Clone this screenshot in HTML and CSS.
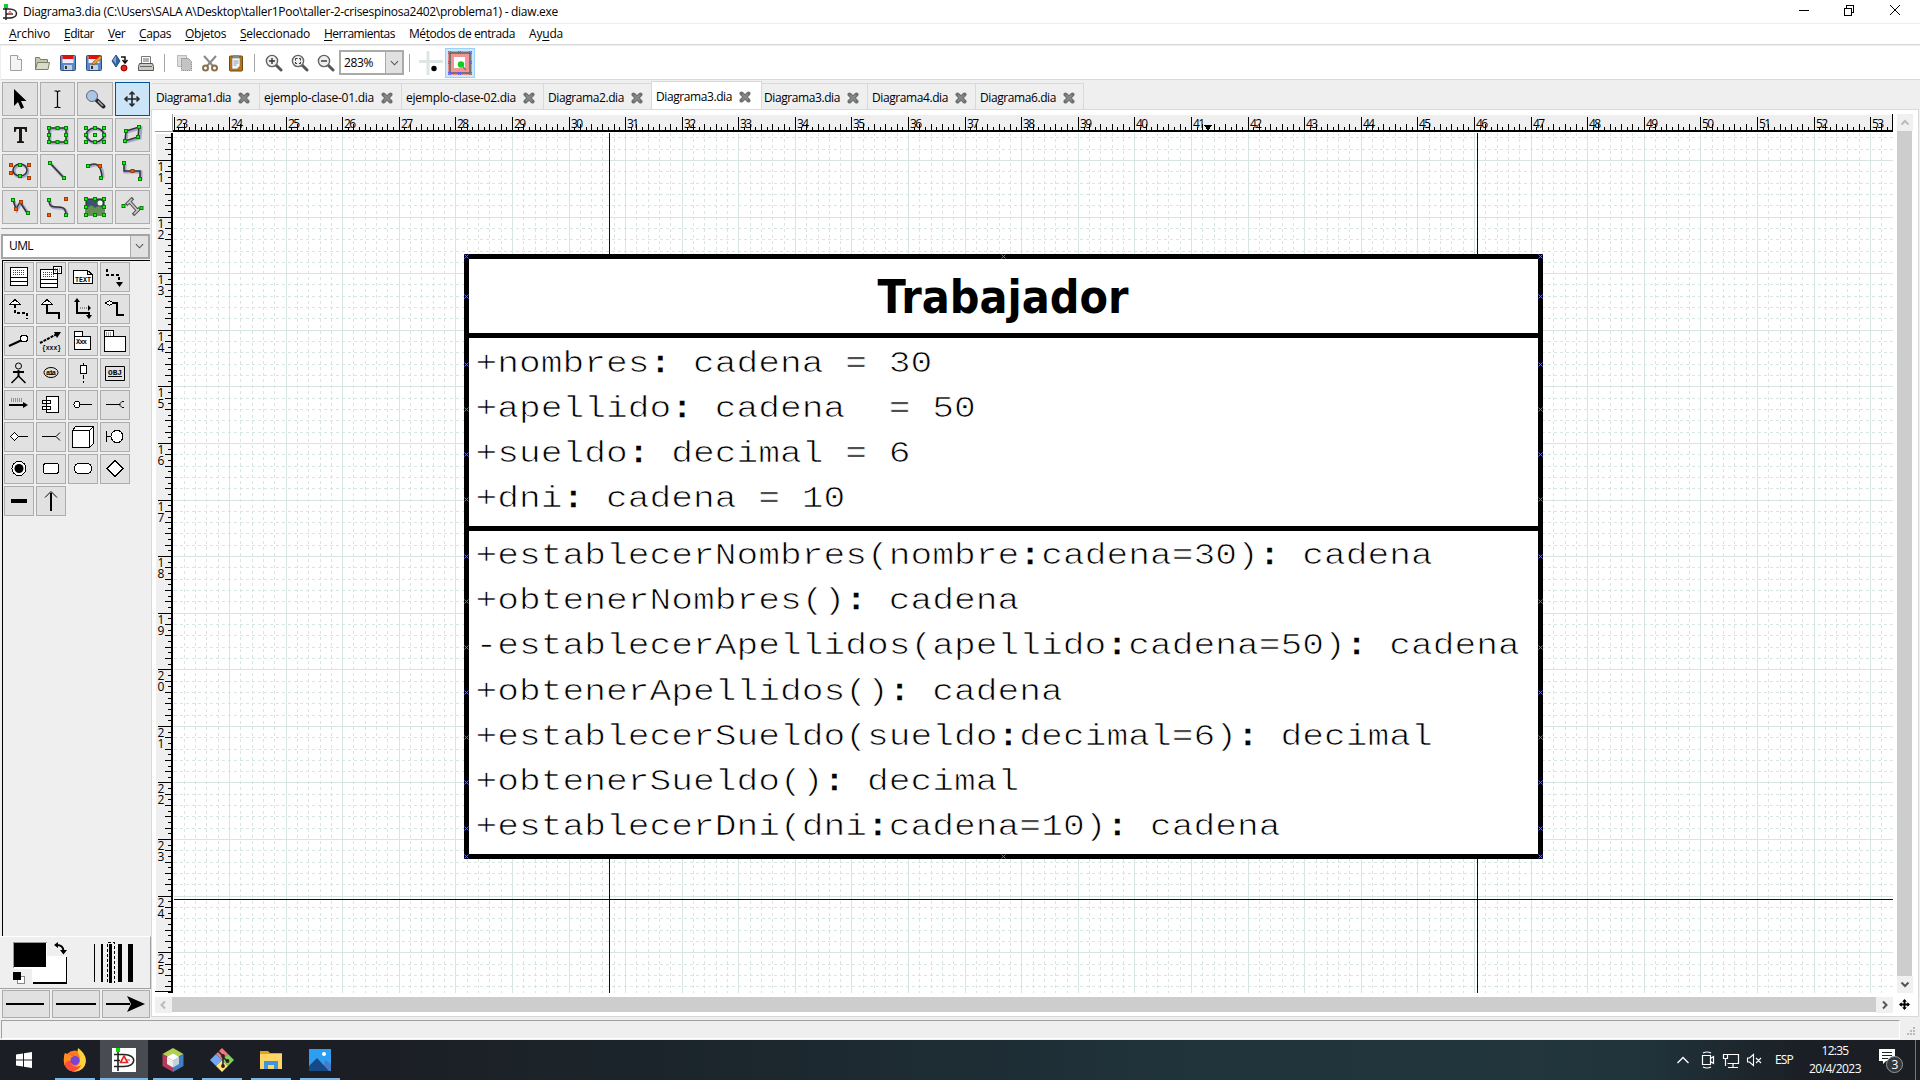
FILE: index.html
```html
<!DOCTYPE html>
<html lang="es">
<head>
<meta charset="utf-8">
<title>Diagrama3.dia</title>
<link rel="stylesheet" href="styles.css">
</head>
<body>
<svg class="defs" width="0" height="0">
  <defs>
    <symbol id="x" viewBox="0 0 12 12"><path d="M2.5 2.5l7 7M9.500 2.500l-7 7" stroke="#6c706c" stroke-width="4" stroke-linecap="round"/><path d="M3 3l6 6M9 3l-6 6" stroke="#868a86" stroke-width="1.800"/></symbol>
    <symbol id="lens" viewBox="0 0 18 18"><path d="M11 11l5 5" stroke="#555753" stroke-width="3" stroke-linecap="round"/><circle cx="7" cy="7" r="5.600" fill="#eeeeec" stroke="#61635f" stroke-width="1.400"/></symbol>
    <g id="g"><rect x="-1.500" y="-1.500" width="3" height="3" fill="#0f0" stroke="#0a7a0a"/></g>
    <g id="r"><rect x="-1.500" y="-1.500" width="3" height="3" fill="#ff5a00" stroke="#a33a00"/></g>
    <g id="cp"><path d="M-2 -2l4 4M2 -2l-4 4" stroke="#6464ff" stroke-width="1"/></g>
  </defs>
</svg>
<header class="titlebar">
  <svg class="appicon" viewBox="0 0 16 18"><path d="M1 6h6c10 0 10 9 0 9H1M4 3v14M4 11h7" fill="none" stroke="#222" stroke-width="1.500"/><path d="M8 8l2 3H6z" fill="none" stroke="#d55"/><rect x="2" y="1" width="4" height="4" fill="#1c3"/></svg>
  <span class="t" data-w="535">Diagrama3.dia (C:\Users\SALA A\Desktop\taller1Poo\taller-2-crisespinosa2402\problema1) - diaw.exe</span>
  <svg class="winbtns" viewBox="0 0 116 20" shape-rendering="crispEdges"><path d="M3 8.500h10M48.500 6.500h7v7h-7zM50.500 6v-2.500h7v7h-2" fill="none" stroke="#000"/><path d="M94 3l10 10M104 3L94 13" stroke="#000" shape-rendering="auto"/></svg>
</header>
<nav class="menubar">
  <span class="t" data-w="41"><u>A</u>rchivo</span><span class="t" data-w="30"><u>E</u>ditar</span><span class="t" data-w="17"><u>V</u>er</span><span class="t" data-w="32"><u>C</u>apas</span><span class="t" data-w="41"><u>O</u>bjetos</span><span class="t" data-w="70"><u>S</u>eleccionado</span><span class="t" data-w="71"><u>H</u>erramientas</span><span class="t" data-w="106">Mé<u>t</u>odos de entrada</span><span class="t" data-w="34">Ay<u>u</u>da</span>
</nav>
<div class="toolbar">
  <svg class="i26" viewBox="0 0 18 18"><path d="M3.500 1.500h7l4 4v11h-11z" fill="#f4f4f3" stroke="#a0a09c"/><path d="M10.500 1.500v4h4" fill="#fff" stroke="#a0a09c"/></svg>
  <svg class="i26" viewBox="0 0 18 18"><path d="M2.500 15.500v-12h4l1 2h7v3" fill="#c3c6b4" stroke="#7b8264"/><path d="M2.500 15.500l2-7h12l-1.500 7z" fill="#d8dcc8" stroke="#7b8264"/></svg>
  <svg class="i26" viewBox="0 0 18 18"><rect x="1.500" y="1.500" width="15" height="15" rx="1" fill="#5c8ac4" stroke="#2c4f86"/><path d="M3.500 2h11v7h-11z" fill="#eef"/><path d="M3.500 2h11v3h-11z" fill="#e01010"/><path d="M5 11h8v5H5z" fill="#ccd"/><path d="M6 12h2v3H6z" fill="#234"/></svg>
  <svg class="i26" viewBox="0 0 18 18"><rect x="1.500" y="1.500" width="15" height="15" rx="1" fill="#5c8ac4" stroke="#2c4f86"/><path d="M3.500 2h11v7h-11z" fill="#eef"/><path d="M3.500 2h11v3h-11z" fill="#e01010"/><path d="M5 11h8v5H5z" fill="#ccd"/><path d="M6 12h2v3H6z" fill="#234"/><path d="M7 11l1-3 7-6 2 2-7 6z" fill="#f0a030" stroke="#85520c" stroke-width=".700"/></svg>
  <svg class="i26" viewBox="0 0 18 18"><path d="M5 1l4 6-4 6-4-6z" fill="#3465a4" stroke="#204a87"/><path d="M2 6l3-4v8z" fill="#86aad6"/><path d="M10 3h4v5M11.500 6l2.500 3 2.500-3" fill="none" stroke="#111" stroke-width="1.500"/><circle cx="13" cy="14" r="3" fill="#d22" stroke="#900"/></svg>
  <svg class="i26" viewBox="0 0 18 18"><path d="M4.500 9V2.500h9V9" fill="#fff" stroke="#777"/><path d="M2.500 9.500h13l1 3v4h-15v-4z" fill="#c8ccc4" stroke="#555"/><path d="M3 12.500h12M6 5h6M6 7h6" stroke="#666"/></svg>
  <i class="sep"></i>
  <svg class="i26" viewBox="0 0 18 18"><path d="M2.500 1.500h9v11h-9z" fill="#ddd" stroke="#888" stroke-dasharray="1 1"/><path d="M6.500 4.500h7l3 3v9h-10z" fill="#c4c4c4" stroke="#777" stroke-dasharray="1 1"/></svg>
  <svg class="i26" viewBox="0 0 18 18"><path d="M3 2l9 10M15 2L6 12" stroke="#888" stroke-width="2"/><circle cx="4.500" cy="14" r="2.500" fill="none" stroke="#8a7048" stroke-width="2"/><circle cx="13.500" cy="14" r="2.500" fill="none" stroke="#8a7048" stroke-width="2"/></svg>
  <svg class="i26" viewBox="0 0 18 18"><rect x="2.500" y="2" width="13" height="15" rx="1" fill="#b6731c" stroke="#704808"/><path d="M5 4h8v8l-3 3H5z" fill="#f5f5f5" stroke="#777" stroke-width=".600"/><path d="M6 1h6v3H6z" fill="#888"/><path d="M6.500 7h5M6.500 9h5M6.500 11h3" stroke="#999"/></svg>
  <i class="sep s2"></i>
  <svg class="i26" viewBox="0 0 18 18"><use href="#lens"/><path d="M4 7h6M7 4v6" stroke="#333" stroke-width="1.400"/></svg>
  <svg class="i26" viewBox="0 0 18 18"><use href="#lens"/><path d="M4.500 6.500v-2h2M8 4.500h1.500v2M9.500 8v1.500H8M6 9.500H4.500V8" stroke="#333" fill="none"/></svg>
  <svg class="i26" viewBox="0 0 18 18"><use href="#lens"/><path d="M4 7h6" stroke="#333" stroke-width="1.400"/></svg>
  <div class="zoom"><span class="t" data-w="29">283%</span><i><svg viewBox="0 0 10 6"><path d="M1 1l4 4 4-4" fill="none" stroke="#555" stroke-width="1.200"/></svg></i></div>
  <i class="sep s3"></i>
  <svg class="gridbtn" viewBox="0 0 24 24"><path d="M0 10.500h24M9 0v24" stroke="#dde6e4" stroke-width="3"/><circle cx="15" cy="17.500" r="2.700"/></svg>
  <svg class="snapbtn" viewBox="0 0 30 30"><rect x=".500" y=".500" width="29" height="29" fill="#cce8ff" stroke="#99d1ff"/><rect x="3" y="3" width="24" height="24" fill="#ee8b8b"/><rect x="5" y="5" width="20" height="20" fill="#f09696" stroke="#757575" stroke-width="2"/><rect x="9" y="9" width="11" height="11" fill="#fff"/><path d="M3 3l3 3M6 3L3 6M13 3l3 3M16 3l-3 3M24 3l3 3M27 3l-3 3M3 13l3 3M6 13l-3 3M24 13l3 3M27 13l-3 3M3 24l3 3M6 24l-3 3M13 24l3 3M16 24l-3 3M24 24l3 3M27 24l-3 3" stroke="#5a5af0" stroke-width="1"/><circle cx="16" cy="16.500" r="3.200" fill="#1c2"/><path d="M18 19l3 3" stroke="#777" stroke-width="1.500"/></svg>
</div>
<main class="main">
  <aside class="side">
    <div class="tools" id="tools">
      <b><svg viewBox="0 0 24 24"><path d="M6 2v17l4-4 3 7 3-1.500-3-6.500h5.500z"/></svg></b>
      <b><svg viewBox="0 0 24 24"><path d="M9.500 4h2l1 1 1-1h2M12.500 5v14M9.500 20.500h2l1-1 1 1h2" fill="none" stroke="#000" stroke-width="1.200"/></svg></b>
      <b><svg viewBox="0 0 24 24"><path d="M13.500 13l7 6.500" stroke="#222" stroke-width="4" stroke-linecap="round"/><path d="M15 14l5 5" stroke="#aaa" stroke-width="1.500"/><circle cx="9" cy="9" r="5.500" fill="#a9c6e6" stroke="#667"/></svg></b>
      <b class="on"><svg viewBox="0 0 24 24"><path d="M12 5v14M5 12h14" stroke="#222" stroke-width="1.600"/><path d="M9.500 7.500L12 5l2.500 2.500M9.500 16.500L12 19l2.500-2.500M7.500 9.500L5 12l2.500 2.500M16.500 9.500L19 12l-2.500 2.500" fill="none" stroke="#222" stroke-width="1.500"/></svg></b>
      <b><svg viewBox="0 0 24 24"><path d="M6 4h13v5h-1.500l-1-3h-2.500v12l2 .5v1.500H9V18.500l2-.5V6H8.500l-1 3H6z" fill="#1a1712"/></svg></b>
      <b><svg viewBox="0 0 24 24"><path class="sh" d="M5 6h17v14H5z"/><path class="ln" d="M4 5h17v14H4z"/><use href="#g" x="4" y="5"/><use href="#g" x="12.500" y="5"/><use href="#g" x="21" y="5"/><use href="#g" x="4" y="12"/><use href="#g" x="21" y="12"/><use href="#g" x="4" y="19"/><use href="#g" x="12.500" y="19"/><use href="#g" x="21" y="19"/></svg></b>
      <b><svg viewBox="0 0 24 24"><ellipse class="sh" cx="13" cy="13" rx="9" ry="7"/><ellipse class="ln" cx="12" cy="12" rx="9" ry="7"/><use href="#g" x="3" y="5"/><use href="#g" x="12" y="5"/><use href="#g" x="21" y="5"/><use href="#g" x="3" y="12"/><use href="#g" x="12" y="12"/><use href="#g" x="21" y="12"/><use href="#g" x="3" y="19"/><use href="#g" x="12" y="19"/><use href="#g" x="21" y="19"/></svg></b>
      <b><svg viewBox="0 0 24 24"><path class="sh" d="M7 9l14-4-1 10-14 4z"/><path class="ln" d="M6 8l13-4-1 10-13 4z"/><use href="#g" x="6" y="8"/><use href="#g" x="19" y="4"/><use href="#g" x="18" y="14"/><use href="#g" x="5" y="18"/></svg></b>
      <b><svg viewBox="0 0 24 24"><ellipse class="sh" cx="13" cy="12" rx="7" ry="6"/><ellipse class="ln" cx="12" cy="11" rx="7" ry="6"/><use href="#g" x="12" y="6"/><use href="#g" x="12" y="17"/><use href="#r" x="3" y="6"/><use href="#r" x="21" y="6"/><use href="#r" x="3" y="14"/><use href="#r" x="21" y="19"/></svg></b>
      <b><svg viewBox="0 0 24 24"><path class="sh" d="M6 5l14 15"/><path class="ln" d="M5 4l14 15"/><use href="#g" x="5" y="4"/><use href="#g" x="19" y="19"/></svg></b>
      <b><svg viewBox="0 0 24 24"><path class="sh" d="M6 8q14-7 14 11"/><path class="ln" d="M5 7Q18 0 19 19"/><use href="#g" x="5" y="7"/><use href="#r" x="17" y="7"/><use href="#g" x="18" y="19"/></svg></b>
      <b><svg viewBox="0 0 24 24"><path class="sh" d="M5 5v8h16v8"/><path class="ln" d="M4 4v8h16v8"/><use href="#g" x="4" y="4"/><use href="#r" x="12.500" y="12"/><use href="#g" x="20" y="20"/></svg></b>
      <b><svg viewBox="0 0 24 24"><path class="sh" d="M6 6l3 9 4-7 7 10"/><path class="ln" d="M5 5l3 9 4-7 7 11"/><use href="#g" x="5" y="5"/><use href="#r" x="8" y="14"/><use href="#r" x="13" y="7"/><use href="#g" x="20" y="18"/></svg></b>
      <b><svg viewBox="0 0 24 24"><path class="sh" d="M5 6c0 14 16 0 17 14"/><path class="ln" d="M4 5c0 14 16 0 17 14"/><use href="#g" x="4" y="5"/><use href="#r" x="4" y="20"/><use href="#r" x="21" y="4"/><use href="#g" x="21" y="20"/></svg></b>
      <b><svg viewBox="0 0 24 24"><rect x="3" y="4" width="18" height="16" fill="#3c5270" stroke="#222"/><circle cx="17" cy="8" r="2.500" fill="#ffd"/><path d="M3 15q5-8 9-2 4-4 9 1v6H3z" fill="#668f56"/><use href="#g" x="3" y="4"/><use href="#g" x="12" y="4"/><use href="#g" x="21" y="4"/><use href="#g" x="3" y="12"/><use href="#g" x="21" y="12"/><use href="#g" x="3" y="20"/><use href="#g" x="12" y="20"/><use href="#g" x="21" y="20"/></svg></b>
      <b><svg viewBox="0 0 24 24"><path d="M6 10l7-7M13 20l7-7M9 6l8 9" stroke="#555" stroke-width="3.500"/><path d="M7 9l5-5M14 19l5-5M9 6l8 9" stroke="#ccc" stroke-width="1.500"/><use href="#g" x="3.500" y="11"/><use href="#g" x="21.500" y="13"/></svg></b>
    </div>
    <div class="sheet"><span class="t" data-w="24">UML</span><i><svg viewBox="0 0 10 6"><path d="M1 1l4 4 4-4" fill="none" stroke="#555" stroke-width="1.200"/></svg></i></div>
    <div class="shapes">
      <b><svg viewBox="0 0 30 30"><path d="M6.500 5.500h17v18h-17zM6 15.500h18M6 19.500h18" class="w"/><path d="M9 8.500h12M9 10.500h12M9 12.500h12" class="d"/></svg></b>
      <b><svg viewBox="0 0 30 30"><path d="M4.500 7.500h17v18h-17zM4 17.500h18M4 21.500h18M17.500 4.500h8v7h-8z" class="w"/><path d="M7 10.500h9M7 12.500h12M7 14.500h12M19 7h5M19 9h5" class="d"/></svg></b>
      <b><svg viewBox="0 0 30 30"><path d="M5.500 8.500h14l5 4v9h-19zM19.500 8.500v4h5" class="w"/><text x="7" y="20" textLength="16" lengthAdjust="spacingAndGlyphs">TEXT</text></svg></b>
      <b><svg viewBox="0 0 30 30"><path d="M7 7v6h12v8" class="k" stroke-dasharray="3 2"/><path d="M16 20h7l-3.500 5z"/></svg></b>
      <b><svg viewBox="0 0 30 30"><path d="M11 11v8h12v6" class="k" stroke-dasharray="3 2"/><path d="M5.500 10.500h11l-5.500-5z" class="w"/></svg></b>
      <b><svg viewBox="0 0 30 30"><path d="M11 11v8h12v6" class="k"/><path d="M5.500 10.500h11l-5.500-5z" class="w"/></svg></b>
      <b><svg viewBox="0 0 30 30"><path d="M9 6v13h12v5" class="k"/><path d="M6 8l3-4 3 4zM18 21h6l-3 4zM20 11l3 3-3 3z"/><path d="M12 14h8" class="d"/></svg></b>
      <b><svg viewBox="0 0 30 30"><path d="M12 9h5v12h7" class="k"/><path d="M5.500 9l4-2.500 4 2.500-4 2.500z" class="w"/></svg></b>
      <b><svg viewBox="0 0 30 30"><path d="M5 20l13-6" class="k"/><circle cx="20" cy="12.500" r="3.500" class="w"/></svg></b>
      <b><svg viewBox="0 0 30 30"><path d="M4 17l17-9" class="k" stroke-dasharray="3 1"/><path d="M18 6h7l-4 6z"/><text x="6" y="24" textLength="19" lengthAdjust="spacingAndGlyphs">{xxx}</text></svg></b>
      <b><svg viewBox="0 0 30 30"><path d="M6.500 5.500h8v5h-8zM6.500 10.500h16v13h-16z" class="w"/><text x="8" y="18" textLength="11">Xxx</text></svg></b>
      <b><svg viewBox="0 0 30 30"><path d="M4.500 4.500h9v6h-9zM4.500 10.500h21v15h-21z" class="w"/><path d="M6 7h6M6 9h6" class="d"/></svg></b>
      <b><svg viewBox="0 0 30 30"><circle cx="14.500" cy="8" r="3" class="w n"/><path d="M14.500 12v7M9 14h11" class="k"/><path d="M14.500 18l-7 7M14.500 18l7 7" fill="none" stroke="#000" stroke-width="1.500"/></svg></b>
      <b><svg viewBox="0 0 30 30"><ellipse cx="15" cy="14.500" rx="7" ry="5" class="w n"/><text x="10" y="17" textLength="10">aia</text></svg></b>
      <b><svg viewBox="0 0 30 30"><path d="M15.500 5v20" class="w" stroke-dasharray="4 2"/><path d="M12.500 7.500h6v8h-6z" class="w"/></svg></b>
      <b><svg viewBox="0 0 30 30"><path d="M5.500 8.500h19v14h-19z" class="w n"/><path d="M8 18.500h14" class="w"/><text x="8" y="17" textLength="14" lengthAdjust="spacingAndGlyphs">OBJ</text></svg></b>
      <b><svg viewBox="0 0 30 30"><path d="M5 15h15" class="k"/><path d="M19 12l5 3-5 3z"/><path d="M7 9h11M7 11h11" class="d"/></svg></b>
      <b><svg viewBox="0 0 30 30"><path d="M10.500 6.500h12v16h-12zM6.500 10.500h8v3h-8zM6.500 16.500h8v3h-8z" class="w"/></svg></b>
      <b><svg viewBox="0 0 30 30"><path d="M12 14.500h12" class="w"/><circle cx="9" cy="14.500" r="3" class="w"/></svg></b>
      <b><svg viewBox="0 0 30 30"><path d="M6 14.500h14M24 11.500h-2l-2 2v2l2 2h2" class="w n"/></svg></b>
      <b><svg viewBox="0 0 30 30"><path d="M14 14.500h10M6.500 14.500l4-4 4 4-4 4z" class="w"/></svg></b>
      <b><svg viewBox="0 0 30 30"><path d="M6 14.500h14M24 10.500l-4 4 4 4" class="w n"/></svg></b>
      <b><svg viewBox="0 0 30 30"><path d="M4.500 8.500l3-4h18v17l-4 4h-17zM4.500 8.500h17v17M21.500 8.500l4-4" class="w"/></svg></b>
      <b><svg viewBox="0 0 30 30"><path d="M6.500 9v11M6.500 14.500h5" class="w"/><circle cx="17" cy="14.500" r="6" class="w"/></svg></b>
      <b><svg viewBox="0 0 30 30"><circle cx="15" cy="14.500" r="7" class="w"/><circle cx="15" cy="14.500" r="4.500"/></svg></b>
      <b><svg viewBox="0 0 30 30"><rect x="7.500" y="9.500" width="15" height="10" rx="2.500" class="w"/></svg></b>
      <b><svg viewBox="0 0 30 30"><rect x="6.500" y="9.500" width="17" height="10" rx="4.500" class="w"/></svg></b>
      <b><svg viewBox="0 0 30 30"><path d="M7 14.500l8-8 8 8-8 8z" class="w"/></svg></b>
      <b><svg viewBox="0 0 30 30"><path d="M7 13h16v4H7z"/></svg></b>
      <b><svg viewBox="0 0 30 30"><path d="M15 7v18" class="k"/><path d="M9 11.500l6-6 6 6" fill="none" stroke="#000"/></svg></b>
    </div>
    <div class="colors"><svg viewBox="0 937 150 52" shape-rendering="crispEdges"><path d="M33 957h34v27H33z"/><path d="M32 956h34v26H32z" fill="#fff"/><path d="M13 942h34v26H13z" fill="#999"/><path d="M14 943h33v26H14z" fill="#fff"/><path d="M14 943h32v24H14z"/><path d="M17.500 976.500h7v7h-7z" fill="#fff" stroke="#888"/><path d="M13 972h8v8h-8z"/><g shape-rendering="auto"><path d="M57 945q6 0 6.500 6" fill="none" stroke="#000" stroke-width="2"/><path d="M54 945l4-3v6zM60 950h7l-3.500 4.500z"/></g><path d="M94 944h1v38h-1zM101 944h2v38h-2zM109 944h3v38h-3zM118 944h4v38h-4zM128 944h5v38h-5z"/><path d="M107.500 942.500h7v40h-7z" fill="none" stroke="#000" stroke-dasharray="3 2"/></svg></div>
    <div class="lines"><b><svg viewBox="0 0 46 26"><path d="M3 13h38" class="k"/></svg></b><b><svg viewBox="0 0 46 26"><path d="M3 13h40" class="k"/></svg></b><b><svg viewBox="0 0 46 26"><path d="M3 13h24" class="k"/><path d="M24 5l18 8-18 8 4-8z"/></svg></b></div>
  </aside>
  <section class="book">
    <div class="tabs">
      <span class="tab"><span class="t" data-w="75">Diagrama1.dia</span><svg><use href="#x"/></svg></span>
      <span class="tab wide"><span class="t" data-w="110">ejemplo-clase-01.dia</span><svg><use href="#x"/></svg></span>
      <span class="tab wide"><span class="t" data-w="110">ejemplo-clase-02.dia</span><svg><use href="#x"/></svg></span>
      <span class="tab last"><span class="t" data-w="76">Diagrama2.dia</span><svg><use href="#x"/></svg></span>
      <span class="tab cur"><span class="t" data-w="76">Diagrama3.dia</span><svg><use href="#x"/></svg></span>
      <span class="tab after"><span class="t" data-w="76">Diagrama3.dia</span><svg><use href="#x"/></svg></span>
      <span class="tab"><span class="t" data-w="76">Diagrama4.dia</span><svg><use href="#x"/></svg></span>
      <span class="tab"><span class="t" data-w="76">Diagrama6.dia</span><svg><use href="#x"/></svg></span>
    </div>
    <div class="page">
      <svg class="canvas" id="canvas" viewBox="155 113 1738 880" width="1738" height="880">
        <g id="grid" shape-rendering="crispEdges"></g>
        <g id="rulers" shape-rendering="crispEdges"></g>
        <g shape-rendering="crispEdges">
          <path d="M609.500 133v860M1477.500 133v860M174 899.500h1719" stroke="#00008b"/>
          <path d="M466.500 256.500h1074v600h-1074zM466 335.500h1075M466 528.500h1075" fill="#fff" stroke="#000" stroke-width="5"/>
        </g>
        <g id="points"></g>
        <text class="cls" x="877.500" y="313" textLength="251" lengthAdjust="spacingAndGlyphs">Trabajador</text>
        <g id="members"></g>
      </svg>
      <div class="vscroll"><i><svg viewBox="0 0 16 16"><path d="M4.500 10.500l3.500-3.500 3.500 3.500" fill="none" stroke="#bbb" stroke-width="2"/></svg></i><em></em><i><svg viewBox="0 0 16 16"><path d="M4.500 6.500L8 10l3.500-3.500" fill="none" stroke="#555" stroke-width="2"/></svg></i></div>
      <div class="hscroll"><i><svg viewBox="0 0 16 16"><path d="M10 4.500L6.500 8l3.500 3.500" fill="none" stroke="#bbb" stroke-width="2"/></svg></i><em></em><i><svg viewBox="0 0 16 16"><path d="M7 4.500l3.500 3.500L7 11.500" fill="none" stroke="#555" stroke-width="2"/></svg></i></div>
      <svg class="nav" viewBox="0 0 12 12"><path d="M6 1v10M1 6h10" stroke="#000" stroke-width="2"/><path d="M6 0l2.500 3h-5zM6 12l2.500-3h-5zM0 6l3-2.500v5zM12 6L9 3.500v5z"/></svg>
    </div>
  </section>
</main>
<footer class="status"><div></div><svg viewBox="0 0 9 9" fill="#bbb"><path d="M6 0h2v2H6zM3 3h2v2H3zM6 3h2v2H6zM0 6h2v2H0zM3 6h2v2H3zM6 6h2v2H6z"/></svg></footer>
<div class="taskbar">
  <span class="app start"><svg viewBox="0 0 24 24"><path d="M4 6.500l7-1v6H4zM12 5.300l8-1.200v7.400h-8zM4 12.500h7v6l-7-1zM12 12.500h8v7.400l-8-1.200z" fill="#fff"/></svg></span>
  <span class="app run"><svg viewBox="0 0 24 24"><circle cx="12" cy="13" r="10.500" fill="#ff7a1c"/><path d="M15 0c8 6 9 12 7 17-3 7-14 9-18 3 8 1 14-3 13-9s-3-6-2-11z" fill="#ffd23c"/><path d="M2 5l3 3c2-2 4-2 7 0l-4 5c-1 6 6 7 10 4-3 8-13 8-16 1-2-5-1-10 0-13z" fill="#ff4b3c"/><path d="M2 5l4 2 6 1-5 5c-4 0-5 2-5 5-2-5-1-10 0-13z" fill="#ff8e22"/><circle cx="12" cy="12.500" r="4.500" fill="#7845d8"/></svg></span>
  <span class="app run act"><svg viewBox="0 0 24 24"><path d="M0 0h24v24H0z" fill="#fff"/><path d="M6 4v19M2 6.500h10c13 0 13 12 0 12H2M2 12.500h6" stroke="#222" stroke-width="1.600" fill="none"/><path d="M12 8l3.500 6.500h-7z" fill="none" stroke="#e22" stroke-width="1.600"/><path d="M4 0h4v4H4z" fill="#0d0"/><path d="M14 12h4" stroke="#e22"/></svg></span>
  <span class="app run"><svg viewBox="0 0 24 24"><path d="M12 0l10.500 6L12 12 1.500 6z" fill="#b3cf52"/><path d="M1.500 6L12 12v12L1.500 18z" fill="#b83a5a"/><path d="M22.500 6L12 12v12l10.500-6z" fill="#3f7fc4"/><path d="M12 5.500l6 3.500-6 3.500L6 9z" fill="#fff"/><path d="M6 9l6 3.500v7L6 16z" fill="#eee"/><path d="M18 9l-6 3.500v7l6-3.500z" fill="#c6d2da"/></svg></span>
  <span class="app run"><svg viewBox="0 0 24 24"><path d="M12 0l6 6-6 6-6-6z" fill="#f07878"/><path d="M6 6l6 6-6 6-6-6z" fill="#74a8f4"/><path d="M18 6l6 6-6 6-6-6z" fill="#80d060"/><path d="M12 12l6 6-6 6-6-6z" fill="#ffe27a"/><path d="M8 3l5 5v10M13 9l4 4" stroke="#2a2022" stroke-width="1.500" fill="none"/><circle cx="13" cy="8" r="1.900" fill="#2a2022"/><circle cx="17.500" cy="13" r="1.900" fill="#2a2022"/><circle cx="13" cy="18" r="1.900" fill="#2a2022"/></svg></span>
  <span class="app run"><svg viewBox="0 0 24 24"><path d="M1 3h8l2 2h12v3H1z" fill="#e2a41c"/><path d="M1 6h22v15H1z" fill="#ffd566"/><path d="M5 13h14v8h-4v-4H9v4H5z" fill="#3f96dc"/></svg></span>
  <span class="app run"><svg viewBox="0 0 24 24"><path d="M1 1h22v22H1z" fill="#2e9ff0"/><path d="M12 23l6-9 5 6v3zM17 12l6 4v7h-8z" fill="#4a7ac8"/><path d="M1 18l8-8 12 13H1z" fill="#164a86"/><circle cx="16" cy="6" r="2" fill="#fff"/></svg></span>
  <span class="tray">
    <svg class="icons" viewBox="1670 1040 100 40" fill="none" stroke="#fff"><path d="M1677.500 1063l5.500-5.500 5.500 5.500" stroke-width="1.300"/><path d="M1702.500 1055.500h8v9h-8zM1710.500 1058.500l3-2v7l-3-2M1703 1053q4-2 8 0M1703 1067q4 2 8 0" stroke-width="1.200"/><path d="M1727.500 1054.500h11v9h-11M1733 1064v3M1728 1067.500h10M1723.500 1054.500h4v4h-4zM1725.500 1058v8" stroke-width="1.200"/><path d="M1747.500 1058h2l4-3.500v11l-4-3.500h-2zM1756 1058l5 5M1761 1058l-5 5" stroke-width="1.100"/></svg>
    <span class="t esp" data-w="18">ESP</span>
    <span class="clock"><span class="t" data-w="27">12:35</span><span class="t" data-w="52">20/4/2023</span></span>
    <svg class="note" viewBox="0 0 26 28"><path d="M1 2h16v12H8l-3 3v-3H1z" fill="#fff"/><path d="M4 5.500h10M4 8.500h10M4 11.500h6" stroke="#222"/><circle cx="16.500" cy="17.500" r="8" fill="#34383c" stroke="#999"/><text x="13.500" y="22" fill="#fff" font-size="12">3</text></svg>
    <i class="peek"></i>
  </span>
</div>
<script src="app.js"></script>
</body>
</html>
```
FILE: styles.css
```css
* { box-sizing: border-box; }
body { margin: 0; width: 1920px; height: 1080px; overflow: hidden; background: #efefef; font: 12px/16px "Open Sans", "Noto Sans", sans-serif; color: #000; display: flex; flex-direction: column; }
.defs { position: absolute; }
svg { display: block; flex: none; }
i, em, b { font-style: normal; font-weight: normal; }
.t { white-space: pre; display: block; flex: none; }
u { text-underline-offset: 2px; }
.titlebar { height: 23px; background: #fff; display: flex; align-items: center; padding-left: 2px; }
.appicon { width: 16px; height: 18px; margin-right: 5px; }
.winbtns { width: 116px; height: 20px; margin-left: auto; margin-right: 8px; }
.menubar { height: 22px; background: #fff; border-top: 1px solid #eee; border-bottom: 1px solid #d9d9d9; display: flex; gap: 14px; align-items: center; padding-left: 9px; }
.toolbar { height: 35px; background: #fff; border-top: 1px solid #eee; border-bottom: 1px solid #d9d9d9; display: flex; align-items: center; padding-left: 2px; margin-left: 1px; }
.i26 { width: 26px; height: 18px; }
.sep { width: 1px; height: 18px; background: #a5a5a5; margin: 0 6px 0 5px; flex: none; }
.s2 { margin: 0 6px 0 5px; }
.zoom { width: 65px; height: 25px; border: 2px solid #aaa; display: flex; align-items: center; padding-left: 3px; }
.zoom i, .sheet i { margin-left: auto; width: 17px; height: 100%; border-left: 1px solid #aaa; background: #e1e1e1; display: grid; place-items: center; }
.zoom i svg, .sheet i svg { width: 9px; height: 6px; }
.s3 { margin: 0 9px 0 5px; }
.gridbtn { width: 24px; height: 24px; }
.snapbtn { width: 30px; height: 30px; margin-left: 2px; }
.main { height: 938px; display: flex; }
.side { width: 151px; display: flex; flex-direction: column; }
.tools { margin: 2px 0 0 2px; width: 148px; height: 142px; display: grid; grid-template-columns: repeat(4, 1fr); grid-template-rows: repeat(4, 1fr); gap: 2px; }
.tools b, .shapes b, .lines b { border: 1px solid #adadad; background: #e1e1e1; display: grid; place-items: center; min-width: 0; }
.tools svg { width: 24px; height: 24px; }
.tools .on { background: #cce4f7; border-color: #005499; }
.sh { fill: none; stroke: #7d7db5; stroke-width: 3; opacity: .6; }
.ln { fill: none; stroke: #333; stroke-width: 1.500; }
.sheet { margin: 10px 0 0 1px; width: 149px; height: 25px; display: flex; border: 2px solid #a5a5a5; background: #fff; align-items: center; padding: 0 0 0 6px; position: relative; }
.sheet i { width: 18px; }
.sheet::before { content: ""; position: absolute; left: -2px; right: -2px; top: -8px; height: 1px; background: #a0a0a0; }
.shapes { height: 677px; margin: 1px 1px 0 2px; border-left: 1px solid #000; border-top: 1px solid #000; padding: 1px 0 0 1px; display: grid; grid-template-columns: repeat(4, 30px); grid-auto-rows: 30px; gap: 2px; align-content: start; }
.shapes svg { width: 30px; height: 30px; margin: -1px; }
.shapes text { font: bold 7px "Liberation Mono", monospace; }
.w { fill: #fff; stroke: #000; shape-rendering: crispEdges; }
.n { fill: none; shape-rendering: auto; }
.k { fill: none; stroke: #000; stroke-width: 2; }
.d { stroke: #444; stroke-dasharray: 1 1; }
.colors { height: 53px; border: 1px solid #a0a0a0; border-width: 0 1px 1px 0; border-top: 1px solid #fff; }
.colors svg { width: 150px; height: 52px; }
.lines { margin: 1px 0 0 2px; width: 148px; height: 28px; display: grid; grid-template-columns: repeat(3, 48px); gap: 2px; }
.lines svg { width: 46px; height: 26px; }
.book { flex: 1; display: flex; flex-direction: column; }
.tabs { height: 29px; display: flex; align-items: flex-end; padding-left: 1px; }
.tab { height: 26px; width: 108px; border: 1px solid #d9d9d9; border-width: 1px 1px 0 0; display: flex; align-items: center; padding: 2px 0 0 4px; gap: 7px; }
.tab svg { width: 12px; height: 12px; }
.wide { width: 142px; }
.last { border-right: 0; width: 107px; }
.cur { width: 111px; height: 29px; background: #fff; border-left-width: 1px; margin-bottom: -1px; padding-bottom: 1px; }
.after { width: 106px; padding-left: 2px; }
.page { height: 908px; width: 1768px; border: 1px solid #d9d9d9; background: #fff; display: grid; grid-template-columns: 1738px 4px 16px; grid-template-rows: 880px 4px 16px; padding: 3px 0 0 3px; }
.canvas { grid-area: 1 / 1; }
.vscroll { grid-area: 1 / 3; display: flex; flex-direction: column; padding-top: 1px; }
.vscroll em, .hscroll em { flex: 1; background: #cdcdcd; }
.vscroll em { margin-right: 1px; }
.hscroll em { margin-bottom: 1px; }
.vscroll i { height: 17px; background: #f0f0f0; }
.hscroll { grid-area: 3 / 1; display: flex; }
.hscroll i { width: 17px; background: #f0f0f0; }
.vscroll svg, .hscroll svg { width: 16px; height: 16px; }
.nav { grid-area: 3 / 3; width: 11px; height: 11px; margin: 2px 0 0 2px; }
.cls { font: bold 45.500px "DejaVu Sans", sans-serif; }
.mem { font: 36.270px "Liberation Mono", monospace; stroke: #fff; stroke-width: .9px; white-space: pre; }
.mem .c { stroke: #000; stroke-width: .5px; }
.rul { font: 12px "Open Sans", sans-serif; }
.status { height: 22px; display: flex; align-items: flex-end; gap: 7px; padding: 2px 4px 1px 1px; }
.status div { flex: 1; height: 19px; border: 1px solid #a0a0a0; border-right-color: #fff; border-bottom-color: #fff; }
.status svg { width: 9px; height: 9px; margin-bottom: 3px; }
.taskbar { height: 40px; display: flex; background: linear-gradient(90deg, #1b1f25 0, #1b1f25 20%, #1c272e 40%, #20323a 60%, #22363d 80%, #20323a 86%, #1b1f25 94%, #1b1e23 100%); color: #fff; }
.app { width: 40px; margin-right: 9px; display: grid; place-items: center; }
.app svg { width: 24px; height: 24px; }
.start { width: 48px; margin-right: 7px; }
.run { border-bottom: 2px solid #76b9ed; padding-top: 2px; }
.run:nth-child(2) { margin-right: 5px; }
.act { width: 48px; background: #484c51; margin-right: 5px; }
.tray { margin-left: auto; display: flex; align-items: center; }
.icons { width: 100px; height: 40px; }
.esp { margin-left: 5px; width: 18px; }
.clock { width: 52px; margin-left: 16px; display: flex; flex-direction: column; align-items: center; gap: 2px; }
.note { width: 26px; height: 28px; margin: 2px 0 0 17px; }
.peek { width: 1px; height: 40px; background: #777; margin: 0 4px 0 11px; }
```
FILE: app.js
```js
document.querySelectorAll('.t').forEach(function (el) {
  el.style.width = 'max-content';
  var w = el.getBoundingClientRect().width;
  el.style.letterSpacing = ((el.dataset.w - w) / el.textContent.length) + 'px';
  el.style.width = el.dataset.w + 'px';
});

// Grid and rulers: one unit is 56.6 px, unit 24 sits at x=229, unit 11 at y=160.
var U = 56.59, X0 = 174, X1 = 1893, Y0 = 133, Y1 = 993;
function px(n) { return Math.round(229 + (n - 24) * U) + 0.5; }
function py(n) { return Math.round(160 + (n - 11) * U) + 0.5; }
var minor = '', major = '', ticks = '', labels = '', i, p, h;
for (i = 115; i <= 268; i++) {
  p = px(i / 5);
  if (p < X0 || p > X1) continue;
  if (i % 5) minor += 'M' + p + ' ' + Y0 + 'V' + Y1; else major += 'M' + p + ' ' + Y0 + 'V' + Y1;
}
for (i = 52; i <= 129; i++) {
  p = py(i / 5);
  if (p < Y0 || p > Y1) continue;
  if (i % 5) minor += 'M' + X0 + ' ' + p + 'H' + X1; else major += 'M' + X0 + ' ' + p + 'H' + X1;
}
document.getElementById('grid').innerHTML =
  '<path d="' + minor + '" stroke="#d8e6e3" stroke-dasharray="3 3"/><path d="' + major + '" stroke="#d8e6e3"/>';

for (i = 230; i <= 536; i++) {
  p = i === 230 ? X0 + 0.5 : px(i / 10);
  if (p > X1) continue;
  h = i % 10 === 0 ? 117 : i % 2 === 0 ? 124 : 127;
  ticks += 'M' + p + ' ' + h + 'V131';
  if (i % 10 === 0) labels += '<text class="rul" x="' + (p + 1.5) + '" y="128" textLength="12">' + i / 10 + '</text>';
}
for (i = 105; i <= 257; i++) {
  p = py(i / 10);
  if (p < Y0 || p > Y1) continue;
  h = i % 10 === 0 ? 158 : i % 2 === 0 ? 165 : 168;
  ticks += 'M' + h + ' ' + p + 'H172';
  if (i % 10 === 0) {
    String(i / 10).split('').forEach(function (ch, k) {
      labels += '<text class="rul" x="157.5" y="' + (p + 10.5 + k * 11) + '" textLength="6">' + ch + '</text>';
    });
  }
}
document.getElementById('rulers').innerHTML =
  '<path d="M174 115h1719v15H174zM156 134h15v858h-15z" fill="#efefef"/>' +
  '<path d="M172.5 114v18M155 131.500h18" stroke="#999"/>' +
  '<path d="M173 130h1720v2H173zM171 133h2v860h-2zM155 991h17v1h-17zM1892 114h1v18h-1z"/>' +
  '<path d="' + ticks + '" stroke="#000"/><path d="M1204 125h8l-4 6z"/>' + labels;

var pts = '';
[256, 296, 364, 409, 454, 499, 556, 601, 647, 692, 737, 782, 828, 856].forEach(function (y) {
  pts += '<use href="#cp" x="466.5" y="' + (y + .5) + '"/><use href="#cp" x="1540.5" y="' + (y + .5) + '"/>';
});
pts += '<use href="#cp" x="1003.5" y="256.5"/><use href="#cp" x="1003.5" y="856.5"/>';
document.getElementById('points').innerHTML = pts;

// Class members with their baselines.
var members = [
  [372, '+nombres: cadena = 30'], [417, '+apellido: cadena  = 50'],
  [462, '+sueldo: decimal = 6'], [507, '+dni: cadena = 10'],
  [564, '+establecerNombres(nombre:cadena=30): cadena'], [609, '+obtenerNombres(): cadena'],
  [654, '-establecerApellidos(apellido:cadena=50): cadena'], [700, '+obtenerApellidos(): cadena'],
  [745, '+establecerSueldo(sueldo:decimal=6): decimal'], [790, '+obtenerSueldo(): decimal'],
  [835, '+establecerDni(dni:cadena=10): cadena']
];
document.getElementById('members').innerHTML = members.map(function (m) {
  return '<text class="mem" xml:space="preserve" transform="translate(475.5 ' + m[0] + ') scale(1 .83)">' +
    m[1].replace(/:/g, '<tspan class="c">:</tspan>') + '</text>';
}).join('');
```
